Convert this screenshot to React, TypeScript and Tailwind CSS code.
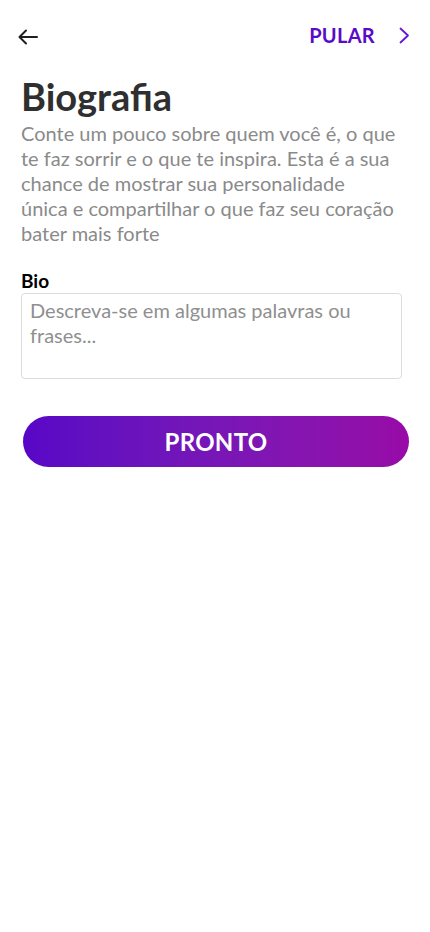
export default function App() {
  return (
    <div className="min-h-[932px] bg-white font-['Lato',sans-serif]">
      <div className="flex items-center justify-between pl-[18px] pr-[20px] pt-[23px]">
        <button className="mt-[4px] flex h-[20px] w-[22px] items-center">
          <svg width="20" height="16" viewBox="0 0 20 16" fill="none" stroke="#1f1f1f" strokeWidth="2" strokeLinecap="round" strokeLinejoin="round">
            <path d="M19 8H2M8 1.5 1.5 8 8 14.5" />
          </svg>
        </button>
        <div className="flex items-center gap-[24px]">
          <span className="text-[20px] font-bold leading-none tracking-[0.3px] text-[#5b0bc8]">PULAR</span>
          <svg width="11" height="17" viewBox="0 0 11 17" fill="none" stroke="#6a12d8" strokeWidth="1.8" strokeLinecap="round" strokeLinejoin="round">
            <path d="M1.5 1.5 9 8.5 1.5 15.5" />
          </svg>
        </div>
      </div>

      <div className="px-[21px]">
        <h1 className="mt-[28px] text-[38px] font-bold leading-[42px] text-[#2f2f2f]">Biografia</h1>
        <p className="mt-[4px] text-[20px] leading-[25px] text-[#8a8a8a]">
          Conte um pouco sobre quem você é, o que
          <br />
          te faz sorrir e o que te inspira. Esta é a sua
          <br />
          chance de mostrar sua personalidade
          <br />
          única e compartilhar o que faz seu coração
          <br />
          bater mais forte
        </p>

        <label className="mt-[23px] block text-[19px] font-bold leading-[24px] text-black">Bio</label>
        <textarea
          placeholder="Descreva-se em algumas palavras ou frases..."
          className="mt-[0px] block h-[86px] w-[381px] resize-none rounded-[4px] border border-[#dcdcdc] px-[8px] py-[4px] text-[20px] leading-[25px] text-[#333] placeholder:text-[#8f8f8f] outline-none"
        />

        <button className="mt-[37px] ml-[2px] flex h-[51px] w-[386px] items-center justify-center rounded-full bg-gradient-to-r from-[#5806c6] to-[#980aa7] text-[24px] font-bold tracking-[0.3px] text-white">
          PRONTO
        </button>
      </div>
    </div>
  )
}
